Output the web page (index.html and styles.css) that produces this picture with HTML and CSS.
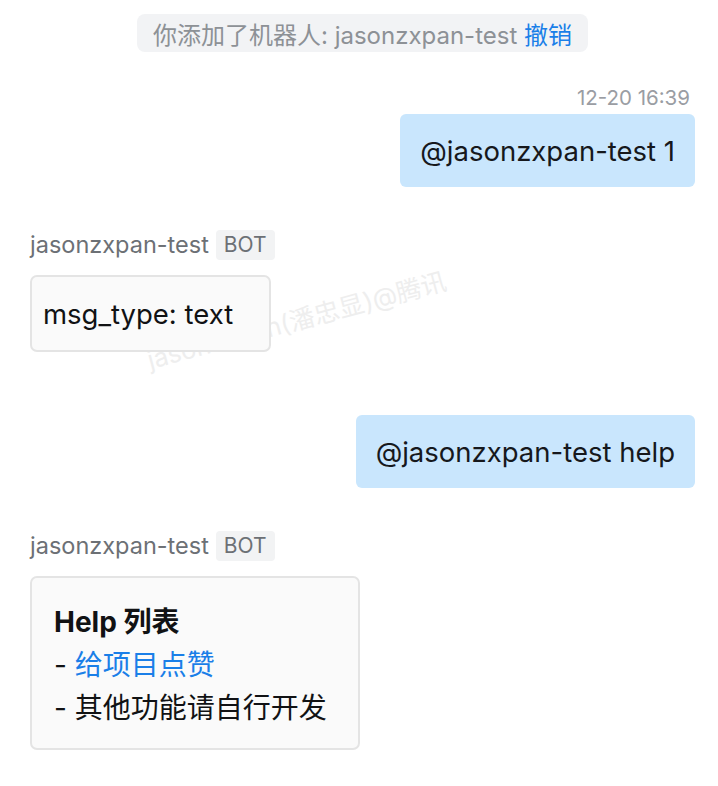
FILE: index.html
```html
<!DOCTYPE html>
<html lang="zh-CN">
<head>
<meta charset="utf-8">
<link rel="stylesheet" href="styles.css">
</head>
<body>
<div class="chat">
  <div class="wm wm-a">jasonzxpan(潘忠显)@腾讯</div>
  <div class="wm wm-b">jasonzxpan(潘忠显)@腾讯</div>

  <div class="notice-row">
    <div class="notice">你添加了机器人: jasonzxpan-test <span class="undo">撤销</span></div>
  </div>

  <div class="time">12-20 16:39</div>
  <div class="out-row">
    <div class="bubble">@jasonzxpan-test 1</div>
  </div>

  <div class="in-msg first-in">
    <div class="sender">
      <span class="name">jasonzxpan-test</span>
      <span class="tag">BOT</span>
    </div>
    <div class="card card-small">msg_type: text</div>
  </div>

  <div class="out-row out-second">
    <div class="bubble">@jasonzxpan-test help</div>
  </div>

  <div class="in-msg second-in">
    <div class="sender">
      <span class="name">jasonzxpan-test</span>
      <span class="tag">BOT</span>
    </div>
    <div class="card card-help">
      <div class="help-title">Help 列表</div>
      <div class="help-line">- <span class="link">给项目点赞</span></div>
      <div class="help-line">- 其他功能请自行开发</div>
    </div>
  </div>
</div>
</body>
</html>
```

FILE: styles.css
```css
* { box-sizing: border-box; }
html, body { margin: 0; padding: 0; background: #ffffff; }
body {
  font-family: Inter, "Noto Sans CJK SC", sans-serif;
  color: #16181c;
}
.chat {
  position: relative;
  width: 718px;
  height: 786px;
  padding: 14px 23px 0 30px;
  display: flex;
  flex-direction: column;
  overflow: hidden;
}
.wm {
  position: absolute;
  z-index: 0;
  font-size: 25.5px;
  color: #eeeeee;
  white-space: nowrap;
  transform: rotate(-15deg);
  transform-origin: left bottom;
  pointer-events: none;
}
.wm-a { left: 152px; top: 339px; }
.wm-b { left: -326px; top: 706px; }

.notice-row, .time, .out-row, .in-msg { position: relative; z-index: 1; }

.notice-row { display: flex; justify-content: center; }
.notice {
  height: 38px;
  padding: 0 16px;
  display: flex;
  align-items: center;
  background: #f2f3f5;
  border-radius: 8px;
  font-size: 24px;
  color: #8d9196;
  white-space: pre;
}
.undo { color: #1a7fe8; }

.time {
  margin-top: 35px;
  text-align: right;
  font-size: 20.5px;
  line-height: 22px;
  color: #9a9da3;
  padding-right: 5px;
}
.out-row {
  margin-top: 5px;
  display: flex;
  justify-content: flex-end;
}
.bubble {
  height: 73px;
  padding: 0 20px;
  display: flex;
  align-items: center;
  background: #c9e6fd;
  border-radius: 6px;
  font-size: 27.5px;
  color: #16181c;
}
.out-second { margin-top: 63px; }

.in-msg { display: flex; flex-direction: column; align-items: flex-start; }
.first-in { margin-top: 42px; }
.second-in { margin-top: 42px; }
.sender {
  height: 31px;
  display: flex;
  align-items: center;
  gap: 7px;
}
.name { font-size: 23.5px; color: #6c7075; }
.tag {
  height: 30px;
  padding: 0 8px;
  display: flex;
  align-items: center;
  background: #f2f3f4;
  border-radius: 4px;
  font-size: 21px;
  color: #6c7075;
}
.card {
  margin-top: 15px;
  background: #fafafa;
  border: 2px solid #e4e4e4;
  border-radius: 7px;
  color: #111214;
  font-size: 27.5px;
}
.card-small {
  height: 77px;
  padding: 0 36px 0 11px;
  display: flex;
  align-items: center;
}
.card-help {
  font-size: 28px;
  padding: 23px 31px 18px 22px;
  line-height: 43px;
}
.help-title { font-weight: 700; }
.link { color: #1a7fe8; }
```
